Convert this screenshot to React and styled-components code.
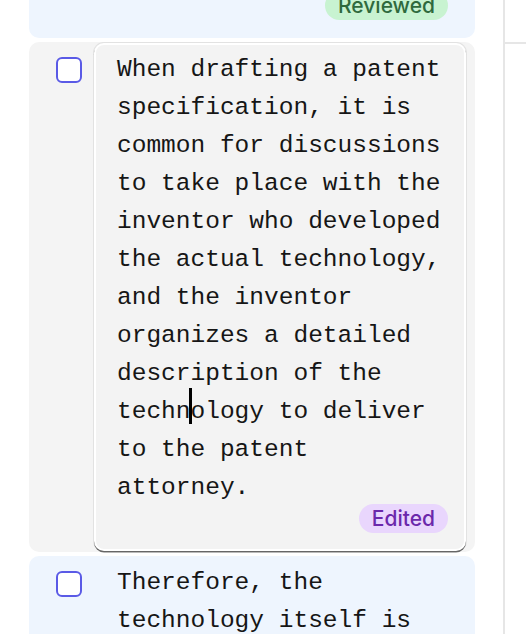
import React from 'react';
import styled, { createGlobalStyle } from 'styled-components';

const GlobalStyle = createGlobalStyle`
  html, body {
    margin: 0;
    padding: 0;
    background: #ffffff;
  }
  * {
    box-sizing: border-box;
  }
`;

const segments = [
  {
    id: 1,
    tone: 'blue',
    text: 'A patent protects an invention.',
    status: 'Reviewed',
  },
  {
    id: 2,
    tone: 'gray',
    editing: true,
    before:
      'When drafting a patent specification, it is common for discussions to take place with the inventor who developed the actual technology, and the inventor organizes a detailed description of the techn',
    after: 'ology to deliver to the patent attorney.',
    status: 'Edited',
  },
  {
    id: 3,
    tone: 'blue',
    text: 'Therefore, the technology itself is',
  },
];

export default function App() {
  return (
    <>
      <GlobalStyle />
      <Screen>
        <Main>
          <List>
            {segments.map(seg => (
              <Card key={seg.id} $tone={seg.tone}>
                <Checkbox />
                <Body $editing={seg.editing}>
                  {seg.editing ? (
                    <Text>
                      {seg.before}
                      <Caret />
                      {seg.after}
                    </Text>
                  ) : (
                    <Text>{seg.text}</Text>
                  )}
                  {seg.status && (
                    <BadgeRow>
                      <Badge $kind={seg.status}>{seg.status}</Badge>
                    </BadgeRow>
                  )}
                </Body>
              </Card>
            ))}
          </List>
        </Main>
        <Side>
          <SideHeader />
        </Side>
      </Screen>
    </>
  );
}

const Screen = styled.div`
  width: 526px;
  height: 634px;
  overflow: hidden;
  display: flex;
  font-family: Inter, 'Liberation Sans', sans-serif;
`;

const Main = styled.div`
  width: 503px;
  flex-shrink: 0;
  padding: 0 28px 0 29px;
`;

const List = styled.div`
  display: flex;
  flex-direction: column;
  gap: 4px;
  margin-top: -90px;
`;

const Card = styled.div`
  display: flex;
  gap: 12px;
  padding: 0 9px 0 27px;
  border-radius: 10px;
  background: ${p => (p.$tone === 'blue' ? '#eef5fe' : '#f4f4f4')};
`;

const Checkbox = styled.span`
  flex-shrink: 0;
  width: 26px;
  height: 26px;
  margin-top: 15px;
  border: 2.5px solid #5a5ae6;
  border-radius: 6px;
  background: #ffffff;
`;

const Body = styled.div`
  flex: 1;
  min-width: 0;
  display: flex;
  flex-direction: column;
  padding: 6px 16px 16px 21px;
  border: 2px solid transparent;
  border-radius: 10px;
  ${p =>
    p.$editing &&
    `
    margin: 1px 0;
    background: #f3f3f3;
    border-color: #ffffff;
    box-shadow: 0 1.5px 0.5px rgba(0, 0, 0, 0.55), 0 0 0 1px #e2e2e2;
  `}
`;

const Text = styled.p`
  margin: 0;
  font-family: 'Liberation Mono', 'DejaVu Sans Mono', monospace;
  font-size: 24.5px;
  line-height: 38px;
  color: #161616;
  white-space: pre-wrap;
  word-break: normal;
`;

/* text cursor, kept out of the line box so it doesn't push the line */
const Caret = styled.span`
  position: relative;
  top: 6px;
  display: inline-block;
  width: 3px;
  height: 36px;
  margin: -36px -1.5px 0;
  vertical-align: baseline;
  background: #000000;
`;

const BadgeRow = styled.div`
  display: flex;
  justify-content: flex-end;
  margin-top: -3px;
`;

const Badge = styled.span`
  height: 29px;
  line-height: 29px;
  padding: 0 13px;
  border-radius: 999px;
  font-size: 21px;
  font-weight: 500;
  background: ${p => (p.$kind === 'Edited' ? '#e9d6fd' : '#c8f3d1')};
  color: ${p => (p.$kind === 'Edited' ? '#6b28ab' : '#2f6a3d')};
`;

const Side = styled.div`
  flex: 1;
  border-left: 2px solid #e6e6e6;
`;

const SideHeader = styled.div`
  height: 44px;
  border-bottom: 2px solid #e6e6e6;
`;
